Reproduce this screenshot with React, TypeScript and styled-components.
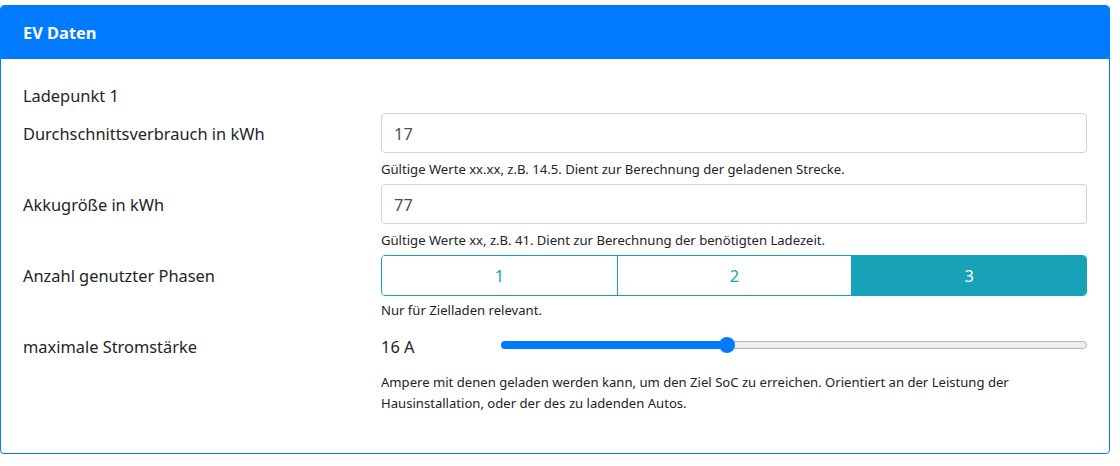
import styled, { createGlobalStyle } from "styled-components";
import { useState } from "react";

const GlobalStyle = createGlobalStyle`
  body {
    margin: 0;
    background: #fff;
    font-family: "Noto Sans", "Open Sans", sans-serif;
    color: #212529;
  }
`;

const phases = [1, 2, 3];
const minAmp = 6;
const maxAmp = 32;

export default function App() {
  const [phase, setPhase] = useState(3);
  const [amp] = useState(16);
  const percent = ((amp - minAmp) / (maxAmp - minAmp)) * 100;

  return (
    <>
      <GlobalStyle />
      <Card>
        <CardHeader>EV Daten</CardHeader>
        <CardBody>
          <Title>Ladepunkt 1</Title>
          <Row>
            <Label>Durchschnittsverbrauch in kWh</Label>
            <Field>
              <Input defaultValue="17" />
              <Help>
                Gültige Werte xx.xx, z.B. 14.5. Dient zur Berechnung der
                geladenen Strecke.
              </Help>
            </Field>
          </Row>
          <Row>
            <Label>Akkugröße in kWh</Label>
            <Field>
              <Input defaultValue="77" />
              <Help>
                Gültige Werte xx, z.B. 41. Dient zur Berechnung der benötigten
                Ladezeit.
              </Help>
            </Field>
          </Row>
          <Row>
            <Label>Anzahl genutzter Phasen</Label>
            <Field>
              <ButtonGroup>
                {phases.map((p) => (
                  <PhaseButton
                    key={p}
                    $active={p === phase}
                    onClick={() => setPhase(p)}
                  >
                    {p}
                  </PhaseButton>
                ))}
              </ButtonGroup>
              <Help $gap={5}>Nur für Zielladen relevant.</Help>
            </Field>
          </Row>
          <SliderRow>
            <Label>maximale Stromstärke</Label>
            <Field>
              <SliderLine>
                <Value>{amp} A</Value>
                <Track>
                  <Fill style={{ width: `${percent}%` }} />
                  <Thumb style={{ left: `${percent}%` }} />
                </Track>
              </SliderLine>
              <Help $gap={6} $lineHeight={21}>
                Ampere mit denen geladen werden kann, um den Ziel SoC zu
                erreichen. Orientiert an der Leistung der Hausinstallation, oder
                der des zu ladenden Autos.
              </Help>
            </Field>
          </SliderRow>
        </CardBody>
      </Card>
    </>
  );
}

const Card = styled.div`
  margin-top: 5px;
  width: 1110px;
  box-sizing: border-box;
  border: 1px solid #007bff;
  border-radius: 4px;
  overflow: hidden;
`;

const CardHeader = styled.div`
  height: 53px;
  display: flex;
  align-items: center;
  padding: 0 22px;
  background: #007bff;
  color: #fff;
  font-size: 16.4px;
  font-weight: 700;
`;

const CardBody = styled.div`
  display: flex;
  flex-direction: column;
  gap: 5px;
  padding: 25px 22px 39px 22px;
  font-size: 16.4px;
`;

const Title = styled.div`
  line-height: 24px;
`;

const Row = styled.div`
  display: grid;
  grid-template-columns: 358px 1fr;
  align-items: start;
`;

const SliderRow = styled(Row)`
  margin-top: 1px;
`;

const Label = styled.div`
  height: 40px;
  display: flex;
  align-items: center;
  font-size: 16.4px;
`;

const Field = styled.div`
  display: flex;
  flex-direction: column;
`;

const Input = styled.input`
  box-sizing: border-box;
  height: 40px;
  padding: 0 12px;
  border: 1px solid #ced4da;
  border-radius: 4px;
  font-family: inherit;
  font-size: 16.4px;
  color: #495057;
  outline: none;
`;

const Help = styled.div<{ $gap?: number; $lineHeight?: number }>`
  margin-top: ${(p) => p.$gap ?? 7}px;
  font-size: 13.1px;
  line-height: ${(p) => p.$lineHeight ?? 19}px;
  color: #212529;
`;

const ButtonGroup = styled.div`
  display: grid;
  grid-template-columns: repeat(3, 1fr);
  height: 41px;
  border: 1px solid #17a2b8;
  border-radius: 4px;
  box-sizing: border-box;
  overflow: hidden;
`;

const PhaseButton = styled.button<{ $active: boolean }>`
  border: none;
  border-left: 1px solid #17a2b8;
  margin: 0;
  font-family: inherit;
  font-size: 16.4px;
  background: ${(p) => (p.$active ? "#17a2b8" : "#fff")};
  color: ${(p) => (p.$active ? "#fff" : "#17a2b8")};
  cursor: pointer;
  &:first-child {
    border-left: none;
  }
`;

const SliderLine = styled.div`
  display: flex;
  align-items: center;
  height: 40px;
`;

const Value = styled.div`
  width: 120px;
  font-size: 16.4px;
`;

const Track = styled.div`
  position: relative;
  flex: 1;
  height: 8px;
  box-sizing: border-box;
  margin-top: -3px;
  border: 1px solid #b5b5b5;
  border-radius: 4px;
  background: #eee;
`;

const Fill = styled.div`
  position: absolute;
  left: -1px;
  top: -1px;
  bottom: -1px;
  background: #007bff;
  border-radius: 4px 0 0 4px;
`;

const Thumb = styled.div`
  position: absolute;
  top: 50%;
  width: 16px;
  height: 16px;
  border-radius: 50%;
  background: #007bff;
  transform: translate(-50%, -50%);
`;
